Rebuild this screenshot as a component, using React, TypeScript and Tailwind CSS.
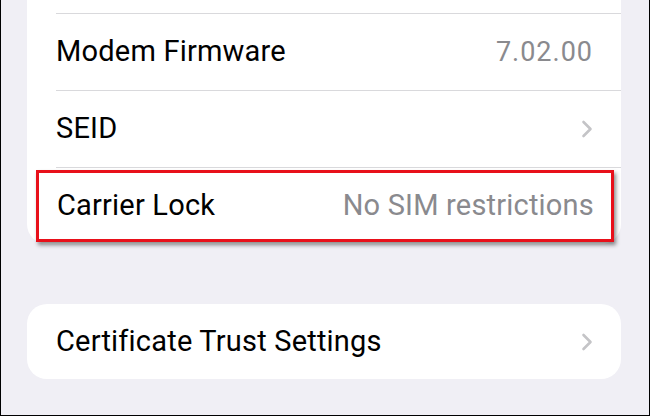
import React from "react";

const Chevron = () => (
  <svg width="12" height="18" viewBox="0 0 12 18" fill="none">
    <path d="M2.5 2 L9.5 9 L2.5 16" stroke="#c4c4c7" strokeWidth="2.6" strokeLinecap="round" strokeLinejoin="round" />
  </svg>
);

export default function App() {
  return (
    <div
      className="w-[650px] h-[416px] overflow-hidden bg-[#f0eff5] border-x border-b border-black flex flex-col"
      style={{ fontFamily: "Roboto, 'Noto Sans', sans-serif" }}
    >
      <div className="ml-[26px] mr-[28px] bg-white rounded-b-[20px] flex flex-col">
        <div className="h-[13px]" />
        <div className="ml-[29px] border-t border-[#d9d9dc] h-[77px] flex items-center justify-between pr-[28px]">
          <span className="text-[29px] tracking-[0.2px] text-black">Modem Firmware</span>
          <span className="text-[27px] text-[#8a8a8e] tracking-[1px]">7.02.00</span>
        </div>
        <div className="ml-[29px] border-t border-[#d9d9dc] h-[77px] flex items-center justify-between pr-[28px]">
          <span className="text-[29px] tracking-[0.2px] text-black">SEID</span>
          <Chevron />
        </div>
        <div className="ml-[29px] border-t border-[#d9d9dc] h-[77px] flex items-center">
          <div className="-ml-[20px] w-[578px] h-[72px] border-[3px] border-[#e8101a] shadow-[2px_3px_4px_rgba(0,0,0,0.45)] flex items-center justify-between pl-[18px] pr-[17px]">
            <span className="text-[29px] tracking-[0.2px] text-black">Carrier Lock</span>
            <span className="text-[29px] tracking-[0.2px] text-[#8a8a8e]">No SIM restrictions</span>
          </div>
        </div>
      </div>
      <div className="mt-[60px] ml-[26px] mr-[28px] bg-white rounded-[20px] h-[75px] flex items-center justify-between pl-[29px] pr-[28px]">
        <span className="text-[29px] tracking-[0.2px] text-black">Certificate Trust Settings</span>
        <Chevron />
      </div>
    </div>
  );
}
